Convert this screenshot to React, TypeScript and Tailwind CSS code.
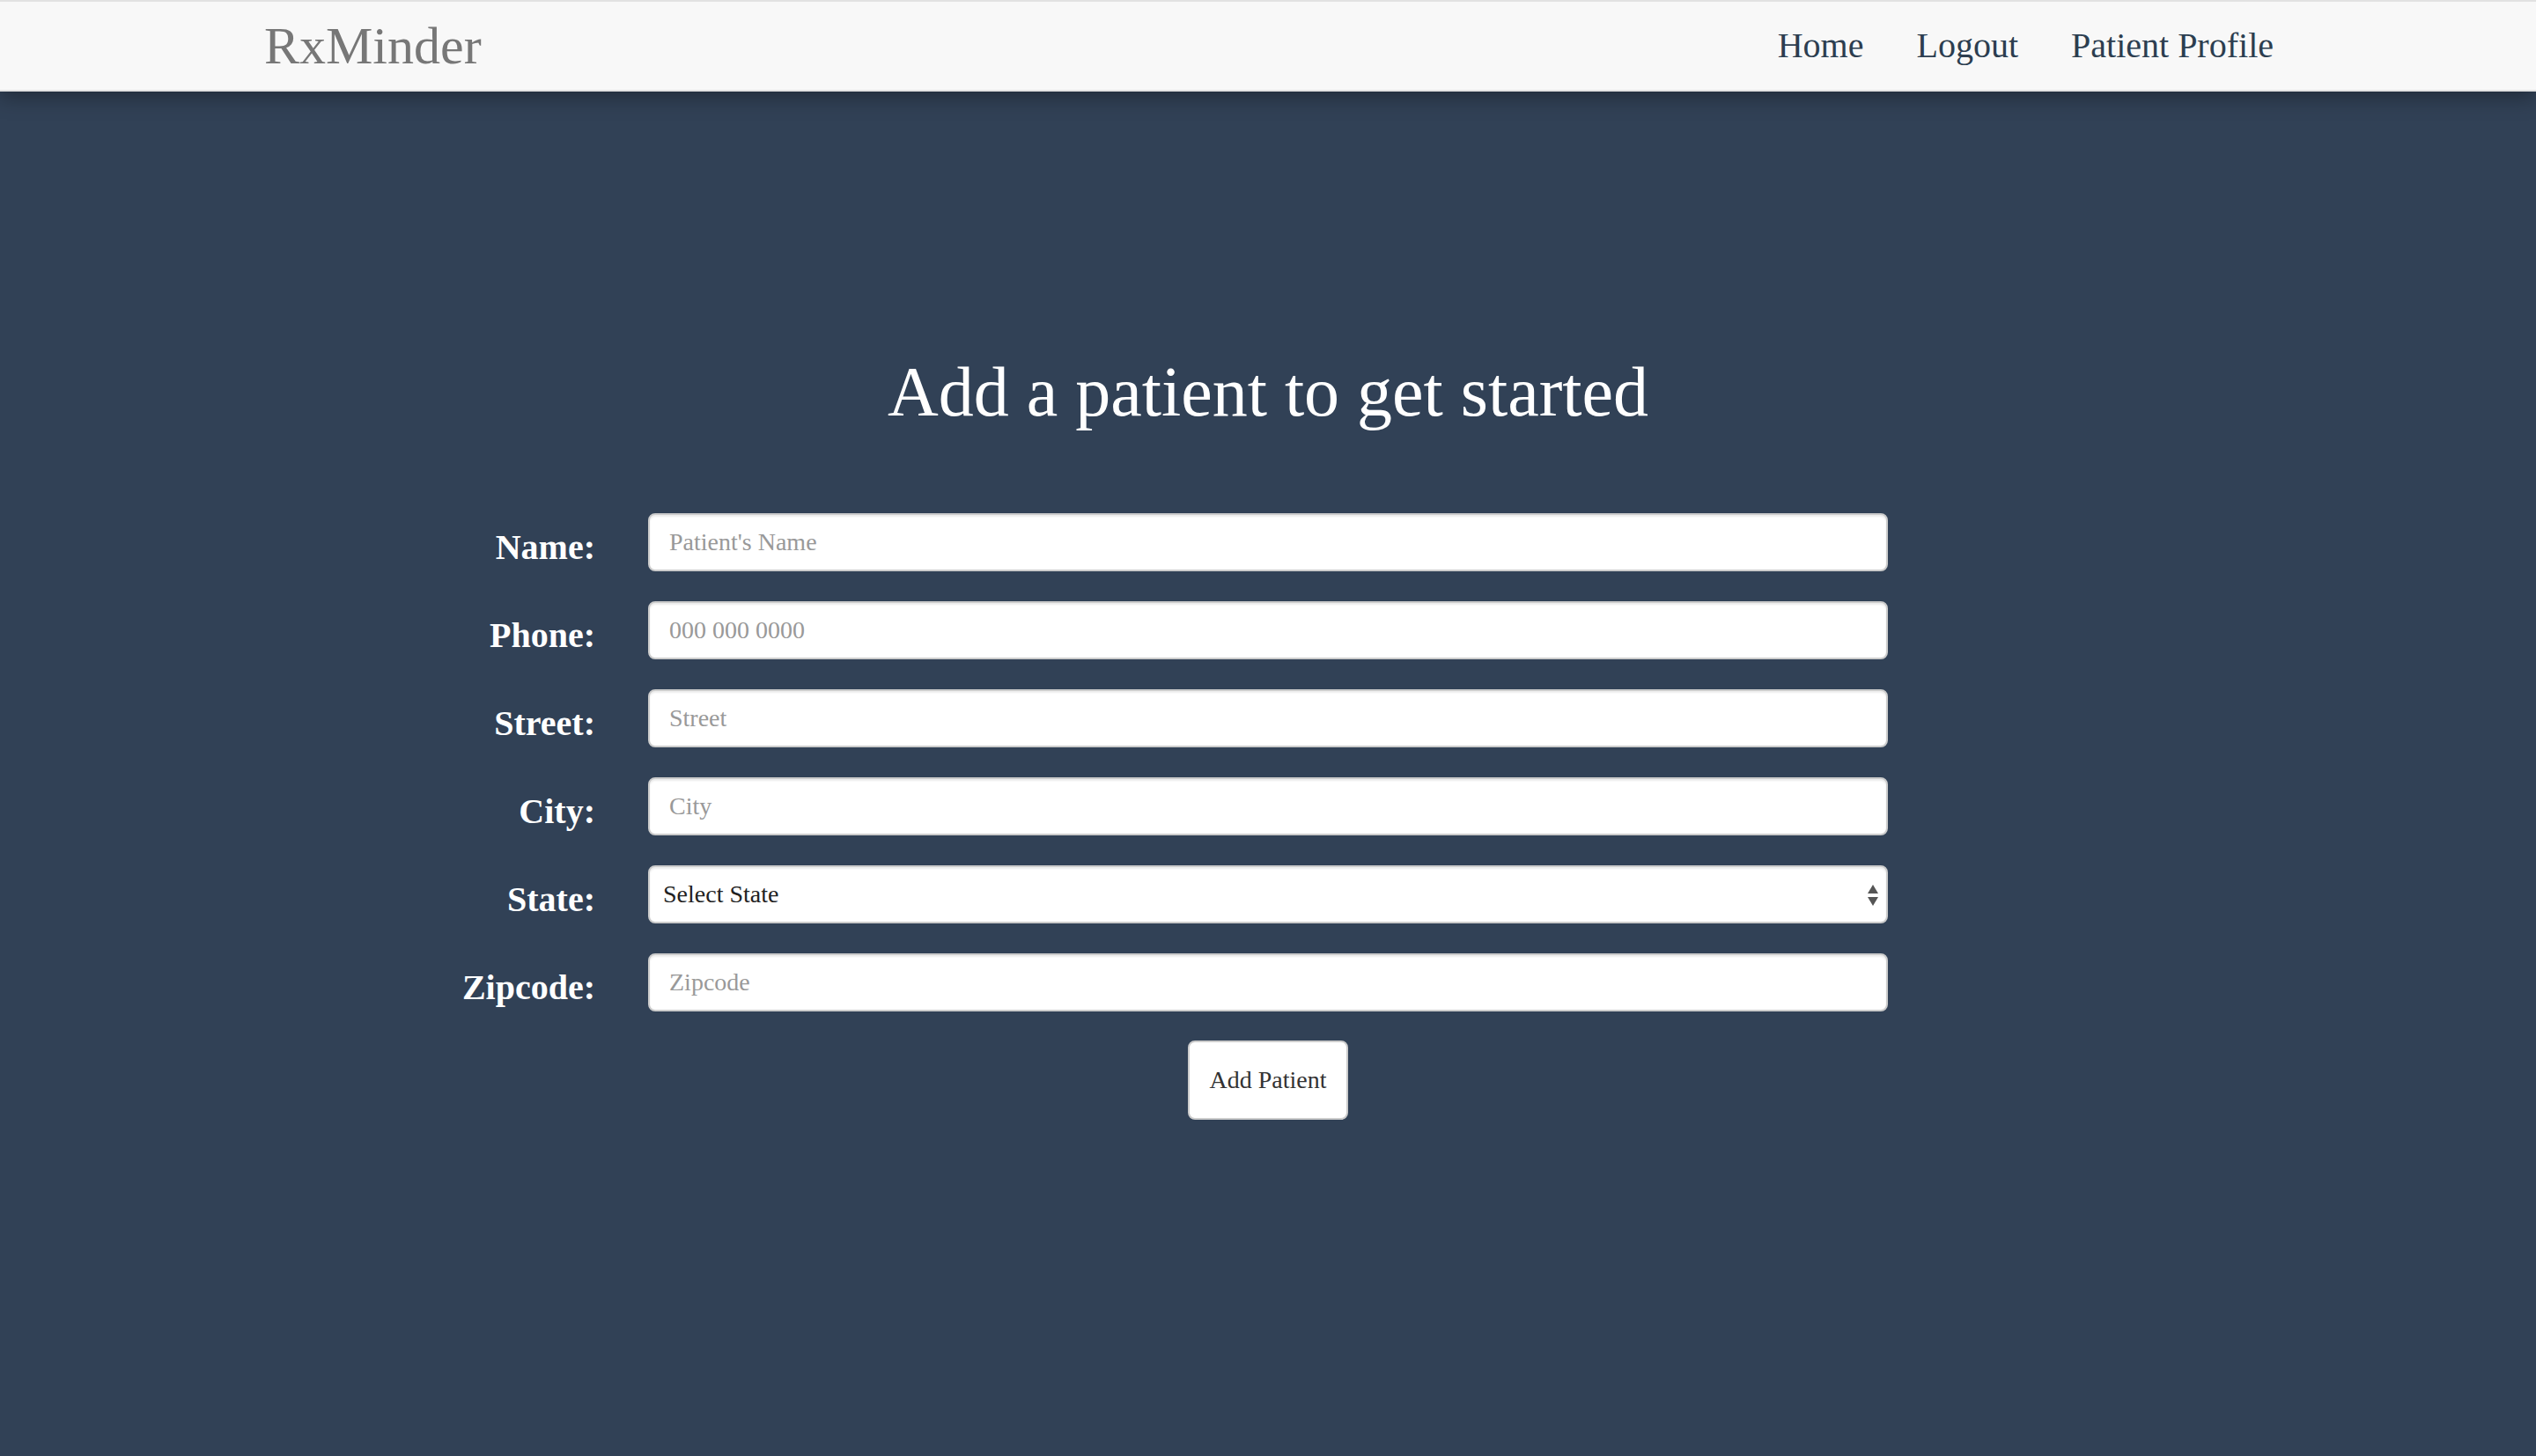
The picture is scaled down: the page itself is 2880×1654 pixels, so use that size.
import * as React from "react";

const fields = [
  { id: "name", label: "Name:", placeholder: "Patient's Name" },
  { id: "phone", label: "Phone:", placeholder: "000 000 0000" },
  { id: "street", label: "Street:", placeholder: "Street" },
  { id: "city", label: "City:", placeholder: "City" },
  { id: "state", label: "State:", placeholder: "" },
  { id: "zip", label: "Zipcode:", placeholder: "Zipcode" },
];

const inputClass =
  "w-[1408px] h-[66px] rounded-[8px] border-2 border-[#cccccc] bg-white px-[22px] text-[28px] text-[#555] placeholder:text-[#999] shadow-[inset_0_2px_2px_rgba(0,0,0,0.08)] outline-none";

function Navbar() {
  return (
    <nav className="relative z-10 h-[104px] border-y-2 border-[#e2e2e2] bg-[#f8f8f8] shadow-[0_6px_22px_rgba(0,0,0,0.35)]">
      <div className="mx-auto flex h-full w-[2340px] items-center justify-between">
        <a className="px-[30px] text-[60px] leading-[60px] text-[#777777]">RxMinder</a>
        <ul className="-mr-[2px] flex items-center">
          {["Home", "Logout", "Patient Profile"].map(item => (
            <li key={item}>
              <a className="block px-[30px] text-[40px] leading-[40px] text-[#2c3e50]">
                {item}
              </a>
            </li>
          ))}
        </ul>
      </div>
    </nav>
  );
}

function StateSelect() {
  return (
    <div className="relative w-[1408px]">
      <select
        defaultValue=""
        className="h-[66px] w-full appearance-none rounded-[8px] border-2 border-[#cccccc] bg-white pl-[15px] text-[28px] text-[#222] shadow-[inset_0_2px_2px_rgba(0,0,0,0.08)] outline-none"
      >
        <option value="">Select State</option>
        <option value="CA">California</option>
        <option value="NY">New York</option>
        <option value="TX">Texas</option>
      </select>
      <svg
        className="pointer-events-none absolute right-[10px] top-[21px]"
        width="14"
        height="26"
        viewBox="0 0 14 26"
      >
        <path d="M7 1 L13 11 L1 11 Z" fill="#555" />
        <path d="M1 15 L13 15 L7 25 Z" fill="#555" />
      </svg>
    </div>
  );
}

export default function App() {
  return (
    <div className="min-h-screen bg-[#314156] font-['Liberation_Serif',serif]">
      <Navbar />
      <main className="pt-[297px]">
        <h1 className="text-center text-[80px] leading-[88px] text-white">
          Add a patient to get started
        </h1>
        <form className="mt-[94px] flex flex-col gap-[34px]">
          {fields.map(f => (
            <div key={f.id} className="grid grid-cols-[1fr_1408px_1fr] items-start">
              <label
                htmlFor={f.id}
                className="pr-[60px] pt-[12px] text-right text-[40px] font-bold leading-[54px] text-white"
              >
                {f.label}
              </label>
              {f.id === "state" ? (
                <StateSelect />
              ) : (
                <input id={f.id} type="text" placeholder={f.placeholder} className={inputClass} />
              )}
              <div />
            </div>
          ))}
          <div className="-mt-[1px] flex justify-center">
            <button
              type="submit"
              className="h-[90px] w-[182px] rounded-[8px] border-2 border-[#cccccc] bg-white text-[28px] text-[#333]"
            >
              Add Patient
            </button>
          </div>
        </form>
      </main>
    </div>
  );
}
